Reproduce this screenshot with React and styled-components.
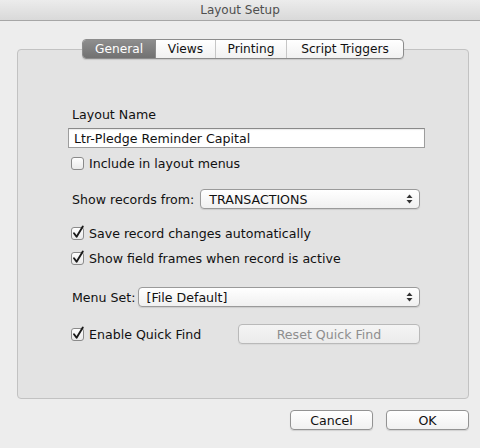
import React from "react";
import styled, { createGlobalStyle } from "styled-components";

const Global = createGlobalStyle`
  html, body { margin: 0; padding: 0; background: #ededed; }
  body { font-family: "DejaVu Sans", "Lucida Grande", sans-serif; font-size: 12.6px; color: #111; }
`;

const Window = styled.div`
  width: 480px;
  height: 448px;
  background: #ededed;
  display: flex;
  flex-direction: column;
  overflow: hidden;
`;

const TitleBar = styled.div`
  height: 20px;
  border-bottom: 1px solid #a6a6a6;
  background: linear-gradient(#ececec, #d9d9d9);
  display: flex;
  align-items: center;
  justify-content: center;
  font-size: 12px;
  color: #4f4f4f;
`;

const Body = styled.div`
  padding: 18px 11px 0 17px;
  display: flex;
  flex-direction: column;
`;

const TabStrip = styled.div`
  align-self: center;
  display: flex;
  position: relative;
  z-index: 2;
  margin-bottom: -10px;
  height: 20px;
  border: 1px solid #8c8c8c;
  border-radius: 4px;
  background: linear-gradient(#ffffff, #f1f1f1);
  box-shadow: 0 1px 1px rgba(0,0,0,0.12);
  overflow: hidden;
  box-sizing: border-box;
`;

const Tab = styled.div`
  width: ${p => p.$w}px;
  box-sizing: border-box;
  display: flex;
  align-items: center;
  justify-content: center;
  font-size: 12.2px;
  color: ${p => (p.$active ? "#ffffff" : "#111")};
  background: ${p => (p.$active ? "linear-gradient(#8e8e8e, #717171)" : "transparent")};
  border-left: ${p => (p.$first ? "none" : p.$afterActive ? "1px solid #8c8c8c" : "1px solid #c6c6c6")};
`;

const Panel = styled.div`
  height: 350px;
  box-sizing: border-box;
  background: #e3e3e3;
  border: 1px solid #c2c2c2;
  border-radius: 4px;
  padding: 56px 48px 0 54px;
  display: flex;
  flex-direction: column;
`;

const Row = styled.div`
  display: flex;
  align-items: center;
  height: ${p => p.$h || 16}px;
  margin-top: ${p => p.$mt || 0}px;
`;

const Label = styled.span`
  white-space: nowrap;
  margin-right: ${p => p.$mr || 0}px;
`;

const TextField = styled.div`
  height: 20px;
  box-sizing: border-box;
  margin: ${p => p.$mt}px -5px 0 -4px;
  background: #fff;
  border: 1px solid #9d9d9d;
  border-top-color: #8a8a8a;
  box-shadow: inset 0 1px 1px rgba(0,0,0,0.08);
  display: flex;
  align-items: center;
  padding-left: 5px;
`;

const Popup = styled.div`
  flex: 1;
  height: 20px;
  box-sizing: border-box;
  border: 1px solid #9a9a9a;
  border-radius: 4px;
  background: linear-gradient(#ffffff, #f0f0f0);
  box-shadow: 0 1px 1px rgba(0,0,0,0.1);
  display: flex;
  align-items: center;
  justify-content: space-between;
  padding: 0 6px 0 8px;
`;

const PushButton = styled.div`
  width: ${p => p.$w}px;
  height: 20px;
  box-sizing: border-box;
  border: 1px solid ${p => (p.$disabled ? "#b9b9b9" : "#939393")};
  border-radius: 4px;
  background: ${p => (p.$disabled ? "linear-gradient(#f4f4f4, #ebebeb)" : "linear-gradient(#ffffff, #f1f1f1)")};
  box-shadow: 0 1px 1px rgba(0,0,0,${p => (p.$disabled ? 0.05 : 0.12)});
  display: flex;
  align-items: center;
  justify-content: center;
  color: ${p => (p.$disabled ? "#8e8e8e" : "#111")};
  margin-left: ${p => (p.$push ? "auto" : "0")};
`;

const Footer = styled.div`
  display: flex;
  justify-content: flex-end;
  gap: 13px;
  margin-top: 11px;
`;

const CheckLabel = styled.span`
  margin-left: 3px;
  white-space: nowrap;
`;

function CheckBox({ checked }) {
  return (
    <svg width="15" height="16" viewBox="0 0 15 16" style={{ marginLeft: -1, flexShrink: 0 }}>
      <defs>
        <linearGradient id="cbg" x1="0" y1="0" x2="0" y2="1">
          <stop offset="0" stopColor="#ffffff" />
          <stop offset="1" stopColor="#e9e9e9" />
        </linearGradient>
      </defs>
      <rect x="0.5" y="2.5" width="12" height="12" rx="2.5" fill="url(#cbg)" stroke="#8a8a8a" />
      {checked && (
        <path d="M3 8.2 L5.6 11.8 L11.8 1.6" fill="none" stroke="#1a1a1a" strokeWidth="1.9" strokeLinecap="round" strokeLinejoin="round" />
      )}
    </svg>
  );
}

function Arrows() {
  return (
    <svg width="7" height="10" viewBox="0 0 7 10">
      <path d="M3.5 0.5 L6.5 4 L0.5 4 Z" fill="#333" />
      <path d="M3.5 9.5 L6.5 6 L0.5 6 Z" fill="#333" />
    </svg>
  );
}

function Check({ checked, children, mt }) {
  return (
    <Row $mt={mt}>
      <CheckBox checked={checked} />
      <CheckLabel>{children}</CheckLabel>
    </Row>
  );
}

export default function App() {
  const tabs = [
    { name: "General", w: 72 },
    { name: "Views", w: 60 },
    { name: "Printing", w: 71 },
    { name: "Script Triggers", w: 117 },
  ];
  return (
    <Window>
      <Global />
      <TitleBar>Layout Setup</TitleBar>
      <Body>
        <TabStrip>
          {tabs.map((t, i) => (
            <Tab key={t.name} $w={t.w} $active={i === 0} $first={i === 0} $afterActive={i === 1}>
              {t.name}
            </Tab>
          ))}
        </TabStrip>
        <Panel>
          <Row><Label>Layout Name</Label></Row>
          <TextField $mt={6}>Ltr-Pledge Reminder Capital</TextField>
          <Check mt={7}>Include in layout menus</Check>
          <Row $h={20} $mt={18}>
            <Label $mr={6}>Show records from:</Label>
            <Popup>
              <span>TRANSACTIONS</span>
              <Arrows />
            </Popup>
          </Row>
          <Check checked mt={16}>Save record changes automatically</Check>
          <Check checked mt={9}>Show field frames when record is active</Check>
          <Row $h={20} $mt={21}>
            <Label $mr={2}>Menu Set:</Label>
            <Popup>
              <span>[File Default]</span>
              <Arrows />
            </Popup>
          </Row>
          <Row $h={20} $mt={17}>
            <CheckBox checked />
            <CheckLabel>Enable Quick Find</CheckLabel>
            <PushButton $w={182} $disabled $push>Reset Quick Find</PushButton>
          </Row>
        </Panel>
        <Footer>
          <PushButton $w={83}>Cancel</PushButton>
          <PushButton $w={83}>OK</PushButton>
        </Footer>
      </Body>
    </Window>
  );
}
